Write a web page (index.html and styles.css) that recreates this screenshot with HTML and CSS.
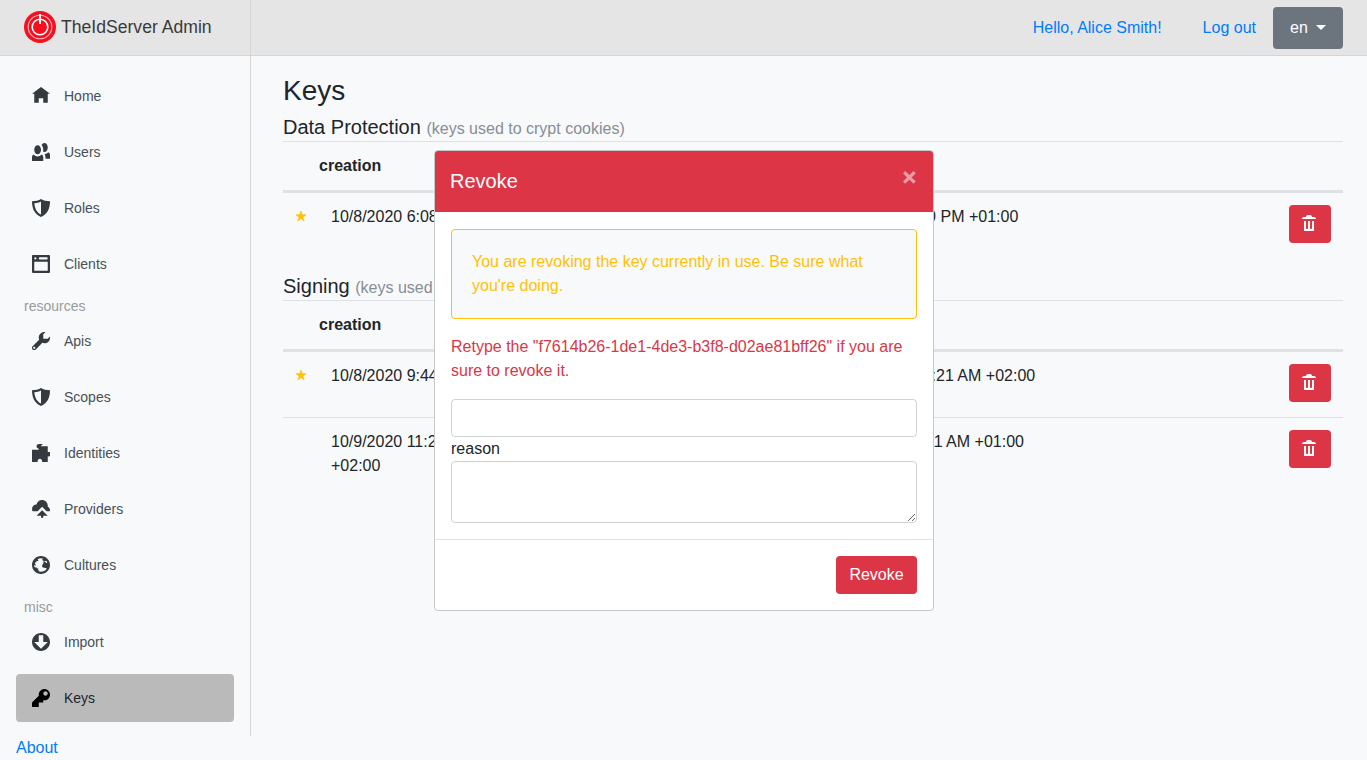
FILE: index.html
```html
<!DOCTYPE html>
<html lang="en">
<head>
  <meta charset="UTF-8">
  <meta name="viewport" content="width=device-width, initial-scale=1.0">
  <title>TheIdServer Admin</title>
  <link rel="stylesheet" href="styles.css">
</head>
<body>
  <header class="topbar">
    <div class="brand">
      <svg class="logo" viewBox="0 0 32 32">
        <circle cx="16" cy="16" r="16" fill="#f5101f"/>
        <circle cx="16" cy="16" r="11.8" fill="none" stroke="#f9b9bd" stroke-width="1.1"/>
        <circle cx="16" cy="16" r="7.8" fill="none" stroke="#fff" stroke-width="1.6"/>
        <rect x="15" y="3" width="2" height="10" fill="#fff"/>
      </svg>
      <span class="brand-name">TheIdServer Admin</span>
    </div>
    <div class="topbar-right">
      <a class="link" href="#">Hello, Alice Smith!</a>
      <a class="link" href="#">Log out</a>
      <button class="lang-btn">en<span class="caret"></span></button>
    </div>
  </header>

  <div class="layout">
    <div class="side-col">
      <nav class="sidebar">
        <a class="nav-item" href="#"><svg class="icon" viewBox="0 0 8 8"><path d="M4 0l-4 3h1v4h2v-2h2v2h2v-4.03l1 .03-4-3z"/></svg>Home</a>
        <a class="nav-item" href="#"><svg class="icon" viewBox="0 0 8 8"><path d="M5.5 0c-.51 0-.95.35-1.22.88.45.54.72 1.28.72 2.13 0 .29-.03.55-.09.81.19.11.38.19.59.19.83 0 1.5-.9 1.5-2s-.67-2-1.5-2zm-3 1c-.83 0-1.5.9-1.5 2s.67 2 1.5 2 1.5-.9 1.5-2-.67-2-1.5-2zm4.75 3.16c-.43.51-1.02.82-1.69.84.27.38.44.84.44 1.34v.66h2v-1.66c0-.52-.31-.97-.75-1.19zm-6.5 1c-.44.22-.75.67-.75 1.19v1.66h5v-1.66c0-.52-.31-.97-.75-1.19-.45.53-1.06.84-1.75.84s-1.3-.32-1.75-.84z"/></svg>Users</a>
        <a class="nav-item" href="#"><svg class="icon" viewBox="0 0 8 8"><path d="M4 0C3 .6 1.5 1 0 1c0 3 1 5.8 4 7 3-1.2 4-4 4-7-1.5 0-3-.4-4-1zM4 1.1v5.8C2 6 1.2 4 1.05 1.9 2 1.8 3.2 1.5 4 1.1z"/></svg>Roles</a>
        <a class="nav-item" href="#"><svg class="icon" viewBox="0 0 8 8"><path d="M.34 0a.5.5 0 0 0-.34.5v7a.5.5 0 0 0 .5.5h7a.5.5 0 0 0 .5-.5v-7a.5.5 0 0 0-.5-.5h-7a.5.5 0 0 0-.09 0 .5.5 0 0 0-.06 0zm1.16 1a.5.5 0 1 1 0 1 .5.5 0 0 1 0-1zm2 0h3a.5.5 0 1 1 0 1h-3a.5.5 0 1 1 0-1zm-2.5 2h6v4h-6v-4z"/></svg>Clients</a>
        <div class="nav-label">resources</div>
        <a class="nav-item" href="#"><svg class="icon" viewBox="0 0 8 8"><path d="M5.5 0c-1.38 0-2.5 1.12-2.5 2.5 0 .32.08.62.19.91l-2.91 2.88c-.39.39-.39 1.05 0 1.44.2.2.46.28.72.28.26 0 .52-.09.72-.28l2.88-2.91c.28.11.58.19.91.19 1.38 0 2.5-1.12 2.5-2.5 0-.16 0-.32-.03-.47l-.97.97h-2v-2l.97-.97c-.15-.03-.31-.03-.47-.03zm-4.5 6.5c.28 0 .5.22.5.5s-.22.5-.5.5-.5-.22-.5-.5.22-.5.5-.5z"/></svg>Apis</a>
        <a class="nav-item" href="#"><svg class="icon" viewBox="0 0 8 8"><path d="M4 0C3 .6 1.5 1 0 1c0 3 1 5.8 4 7 3-1.2 4-4 4-7-1.5 0-3-.4-4-1zM4 1.1v5.8C2 6 1.2 4 1.05 1.9 2 1.8 3.2 1.5 4 1.1z"/></svg>Scopes</a>
        <a class="nav-item" href="#"><svg class="icon" viewBox="0 0 8 8"><path d="M3 0c-.55 0-1 .45-1 1 0 .43.28.78.66.91.2.08.34.26.34.59h-3v5.5h2.5v-.5c0-.55.45-1 1-1s1 .45 1 1v.5h2.5v-2.5h.5c.55 0 1-.45 1-1s-.45-1-1-1h-.5v-2.5h-3c0-.33.14-.51.34-.59.38-.13.66-.48.66-.91 0-.55-.45-1-1-1z"/></svg>Identities</a>
        <a class="nav-item" href="#"><svg class="icon" viewBox="0 0 8 8"><path d="M4.5 0c-1.21 0-2.27.86-2.5 2-1.1 0-2 .9-2 2 0 .37.11.71.28 1h2.22l2-2 2 2h1.41c.06-.16.09-.32.09-.5 0-.65-.42-1.29-1-1.5v-.5c0-1.38-1.12-2.5-2.5-2.5zm0 4.5l-2.5 2.5h2v.5a.5.5 0 1 0 1 0v-.5h2l-2.5-2.5z"/></svg>Providers</a>
        <a class="nav-item" href="#"><svg class="icon" viewBox="0 0 8 8"><path d="M4 0c-2.21 0-4 1.79-4 4s1.79 4 4 4 4-1.79 4-4-1.79-4-4-4zm0 1c.33 0 .64.09.94.19-.21.2-.45.38-.41.56.04.18.69.13.69.5 0 .27-.42.35-.13.66.35.35-.64.98-.66 1.44-.03.83.84.97 1.53.97.42 0 .53.2.5.44-.54.77-1.46 1.25-2.47 1.25-.38 0-.73-.09-1.06-.22.22-.44-.28-1.31-.75-1.59-.23-.23-.72-.14-1-.25-.09-.27-.18-.54-.19-.84.03-.05.08-.09.16-.09.19 0 .45.38.59.34.18-.04-.74-1.31-.31-1.56.2-.12.6.39.47-.16-.12-.51.36-.28.66-.41.26-.11.45-.41.13-.59-.06-.03-.13-.1-.22-.19.45-.27.97-.44 1.53-.44zm2.31 1.09c.18.22.32.46.44.72 0 .01 0 .02 0 .03-.04.07-.11.11-.22.22-.28.28-.32-.21-.44-.31-.13-.12-.6.02-.66-.13-.07-.18.5-.42.88-.53z"/></svg>Cultures</a>
        <div class="nav-label">misc</div>
        <a class="nav-item" href="#"><svg class="icon" viewBox="0 0 8 8"><path d="M4 0c-2.2 0-4 1.8-4 4s1.8 4 4 4 4-1.8 4-4-1.8-4-4-4zm-1 1h2v3h2l-3 3-3-3h2v-3z"/></svg>Import</a>
        <a class="nav-item active" href="#"><svg class="icon" viewBox="0 0 8 8"><path d="M5.5 0c-1.38 0-2.5 1.12-2.5 2.5 0 .16 0 .32.03.47l-3.03 3.03v2h3v-2h2v-1l.03-.03c.15.03.31.03.47.03 1.38 0 2.5-1.12 2.5-2.5s-1.12-2.5-2.5-2.5zm.5 1c.55 0 1 .45 1 1s-.45 1-1 1-1-.45-1-1 .45-1 1-1z"/></svg>Keys</a>
      </nav>
      <a class="link about" href="#">About</a>
    </div>

    <main class="content">
      <h1>Keys</h1>

      <section class="key-section">
        <h2>Data Protection <small>(keys used to crypt cookies)</small></h2>
        <div class="key-row key-head">
          <div></div>
          <div class="head-cell">creation</div>
          <div class="head-cell">activation</div>
          <div class="head-cell">expiration</div>
          <div></div>
        </div>
        <div class="key-row">
          <div class="cell"><svg class="star" viewBox="0 0 8 8"><path d="M4 0l-1 3h-3l2.5 2-1 3 2.5-2 2.5 2-1-3 2.5-2h-3l-1-3z"/></svg></div>
          <div class="cell">10/8/2020 6:08:10 PM +02:00</div>
          <div class="cell">10/8/2020 6:08:10 PM +02:00</div>
          <div class="cell">10/6/2021 6:08:10 PM +01:00</div>
          <div class="cell-action"><button class="trash-btn"><svg class="trash" viewBox="0 0 8 8"><path d="M3 0c-.55 0-1 .45-1 1h-1c-.55 0-1 .45-1 1h7c0-.55-.45-1-1-1h-1c0-.55-.45-1-1-1h-1zm-2 3v4.81c0 .11.08.19.19.19h4.63c.11 0 .19-.08.19-.19v-4.81h-1v3.5c0 .28-.22.5-.5.5s-.5-.22-.5-.5v-3.5h-1v3.5c0 .28-.22.5-.5.5s-.5-.22-.5-.5v-3.5h-1z"/></svg></button></div>
        </div>
      </section>

      <section class="key-section">
        <h2>Signing <small>(keys used to sign tokens)</small></h2>
        <div class="key-row key-head">
          <div></div>
          <div class="head-cell">creation</div>
          <div class="head-cell">activation</div>
          <div class="head-cell">expiration</div>
          <div></div>
        </div>
        <div class="key-row key-row-line">
          <div class="cell"><svg class="star" viewBox="0 0 8 8"><path d="M4 0l-1 3h-3l2.5 2-1 3 2.5-2 2.5 2-1-3 2.5-2h-3l-1-3z"/></svg></div>
          <div class="cell">10/8/2020 9:44:21 AM +02:00</div>
          <div class="cell">10/8/2020 9:44:21 AM +02:00</div>
          <div class="cell">10/10/2021 10:44:21 AM +02:00</div>
          <div class="cell-action"><button class="trash-btn"><svg class="trash" viewBox="0 0 8 8"><path d="M3 0c-.55 0-1 .45-1 1h-1c-.55 0-1 .45-1 1h7c0-.55-.45-1-1-1h-1c0-.55-.45-1-1-1h-1zm-2 3v4.81c0 .11.08.19.19.19h4.63c.11 0 .19-.08.19-.19v-4.81h-1v3.5c0 .28-.22.5-.5.5s-.5-.22-.5-.5v-3.5h-1v3.5c0 .28-.22.5-.5.5s-.5-.22-.5-.5v-3.5h-1z"/></svg></button></div>
        </div>
        <div class="key-row">
          <div class="cell"></div>
          <div class="cell">10/9/2020 11:21:11 AM +02:00</div>
          <div class="cell">10/9/2020 11:21:11 AM +02:00</div>
          <div class="cell">10/7/2021 11:21:11 AM +01:00</div>
          <div class="cell-action"><button class="trash-btn"><svg class="trash" viewBox="0 0 8 8"><path d="M3 0c-.55 0-1 .45-1 1h-1c-.55 0-1 .45-1 1h7c0-.55-.45-1-1-1h-1c0-.55-.45-1-1-1h-1zm-2 3v4.81c0 .11.08.19.19.19h4.63c.11 0 .19-.08.19-.19v-4.81h-1v3.5c0 .28-.22.5-.5.5s-.5-.22-.5-.5v-3.5h-1v3.5c0 .28-.22.5-.5.5s-.5-.22-.5-.5v-3.5h-1z"/></svg></button></div>
        </div>
      </section>
    </main>
  </div>

  <div class="modal">
    <div class="modal-header">
      <span class="modal-title">Revoke</span>
      <svg class="close-x" viewBox="0 0 8 8"><path d="M1.41 0l-1.41 1.41.72.72 1.78 1.81-1.78 1.78-.72.69 1.41 1.44.72-.72 1.81-1.81 1.78 1.81.69.72 1.44-1.44-.72-.69-1.81-1.78 1.81-1.81.72-.72-1.44-1.41-.69.72-1.78 1.78-1.81-1.78-.72-.72z"/></svg>
    </div>
    <div class="modal-body">
      <div class="alert-warn">You are revoking the key currently in use. Be sure what you're doing.</div>
      <p class="retype">Retype the "f7614b26-1de1-4de3-b3f8-d02ae81bff26" if you are sure to revoke it.</p>
      <input class="field" type="text">
      <label class="field-label" for="reason">reason</label>
      <textarea class="field field-area" id="reason"></textarea>
    </div>
    <div class="modal-footer">
      <button class="revoke-btn">Revoke</button>
    </div>
  </div>
</body>
</html>
```

FILE: styles.css
```css
* {
  box-sizing: border-box;
}

body {
  margin: 0;
  height: 760px;
  overflow: hidden;
  background-color: #f8f9fa;
  color: #212529;
  font-family: 'Liberation Sans', Arial, sans-serif;
  font-size: 16px;
  line-height: 24px;
}

a {
  text-decoration: none;
}

.link {
  color: #007bff;
}

/* top bar */
.topbar {
  display: flex;
  height: 56px;
  background-color: #e5e5e5;
  border-bottom: 1px solid #d6d6d6;
}

.brand {
  display: flex;
  align-items: center;
  width: 251px;
  padding: 0 0 2px 24px;
  border-right: 1px solid #d6d6d6;
}

.logo {
  width: 32px;
  height: 32px;
  margin-right: 5px;
}

.brand-name {
  font-size: 17.6px;
  color: #3a3a3a;
}

.topbar-right {
  flex: 1;
  display: flex;
  align-items: center;
  justify-content: flex-end;
  gap: 41px;
  padding: 0 24px 0 0;
}

.lang-btn {
  width: 70px;
  height: 42px;
  margin-left: -24px;
  border: none;
  border-radius: 4px;
  background-color: #6c757d;
  color: #fff;
  font: inherit;
}

.caret {
  display: inline-block;
  margin-left: 8px;
  vertical-align: 3px;
  border-top: 5px solid #fff;
  border-left: 5px solid transparent;
  border-right: 5px solid transparent;
}

/* sidebar */
.layout {
  display: flex;
}

.side-col {
  width: 251px;
  flex-shrink: 0;
}

.sidebar {
  height: 680px;
  padding: 16px;
  border-right: 1px solid #d6d6d6;
}

.nav-item {
  display: flex;
  align-items: center;
  height: 48px;
  margin-bottom: 8px;
  padding-left: 16px;
  border-radius: 4px;
  color: #495057;
  font-size: 14px;
}

.nav-item.active {
  background-color: #b9bab9;
  color: #212529;
}

.nav-item.active .icon {
  fill: #000;
}

.nav-label {
  padding-left: 8px;
  color: #9a9a9a;
  font-size: 14px;
  line-height: 21px;
}

.icon {
  width: 18px;
  height: 18px;
  margin-right: 14px;
  fill: #343a40;
  fill-rule: evenodd;
}

.about {
  display: block;
  margin-left: 16px;
}

/* keys tables */
.content {
  flex: 1;
  padding: 17px 24px 0 32px;
}

h1 {
  margin: 0 0 6px;
  font-size: 28px;
  font-weight: 400;
  line-height: 36px;
}

h2 {
  height: 27px;
  margin: 0;
  border-bottom: 1px solid #dee2e6;
  font-size: 20px;
  font-weight: 400;
  line-height: 24px;
}

h2 small {
  color: #868e96;
  font-size: 16px;
}

.key-section {
  margin-bottom: 16px;
}

.key-row {
  display: grid;
  grid-template-columns: 36px 238px 238px 1fr 66px;
}

.key-head {
  height: 51px;
  border-bottom: 3px solid #dee2e6;
}

.key-row-line {
  border-bottom: 1px solid #dee2e6;
}

.head-cell {
  padding-top: 12px;
  font-weight: 700;
}

.cell {
  padding: 12px 12px 0;
}

.cell-action {
  padding: 12px 12px 15px;
  text-align: right;
}

.star {
  display: block;
  width: 10px;
  height: 10px;
  margin: 6px 0 0 1px;
  fill: #ffc107;
  stroke: #ffc107;
  stroke-width: 0.6;
}

.trash-btn {
  display: block;
  width: 42px;
  height: 38px;
  padding: 0;
  border: none;
  border-radius: 4px;
  background-color: #dc3545;
}

.trash {
  display: block;
  width: 16px;
  height: 16px;
  margin: 0 auto 3px;
  fill: #fff;
}

/* revoke dialog */
.modal {
  position: absolute;
  left: 434px;
  top: 150px;
  width: 500px;
  background-color: #fff;
  border: 1px solid #c6c8ca;
  border-radius: 4px;
  overflow: hidden;
}

.modal-header {
  display: flex;
  justify-content: space-between;
  align-items: flex-start;
  height: 61px;
  padding: 15px 17px 15px 15px;
  background-color: #dc3545;
  color: #fff;
}

.modal-title {
  font-size: 20px;
  line-height: 30px;
}

.close-x {
  width: 13px;
  height: 13px;
  margin-top: 5px;
  fill: #fff;
  opacity: 0.5;
}

.modal-body {
  padding: 17px 16px 16px;
}

.alert-warn {
  padding: 20px;
  background-color: #f8f9fa;
  border: 1px solid #ffc107;
  border-radius: 4px;
  color: #ffc107;
}

.retype {
  margin: 16px 0;
  color: #dc3545;
}

.field {
  display: block;
  width: 100%;
  height: 38px;
  padding: 6px 12px;
  background-color: #fff;
  border: 1px solid #ced4da;
  border-radius: 4px;
  font: inherit;
}

.field-area {
  height: 62px;
}

.field-label {
  display: block;
}

.modal-footer {
  display: flex;
  justify-content: flex-end;
  padding: 16px;
  border-top: 1px solid #dee2e6;
}

.revoke-btn {
  width: 81px;
  height: 38px;
  padding: 0;
  border: none;
  border-radius: 4px;
  background-color: #dc3545;
  color: #fff;
  font: inherit;
}
```
